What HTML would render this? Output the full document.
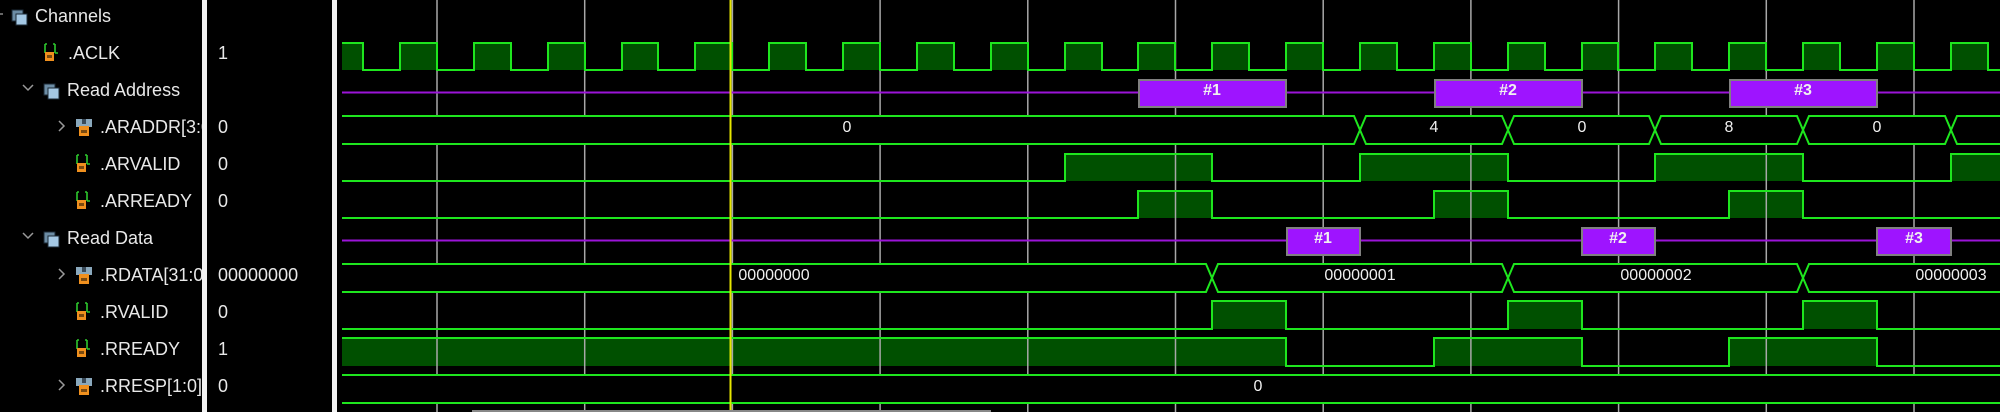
<!DOCTYPE html>
<html><head><meta charset="utf-8"><style>
html,body{margin:0;padding:0;background:#000;width:2000px;height:412px;overflow:hidden}
.t{position:absolute;font-family:"Liberation Sans",sans-serif;font-size:18px;color:#e8e8e8;white-space:nowrap;line-height:1}
#names{position:absolute;left:0;top:0;width:202px;height:412px;overflow:hidden}
</style></head><body>
<svg width="2000" height="412" style="position:absolute;left:0;top:0">
<defs>
<g id="sig"><path d="M1,1 V10 M1,1 H3 M11,1 V10 M11,10 H14 M9,1 H11" stroke="#2ec82e" stroke-width="1.6" fill="none"/><rect x="1" y="9" width="9" height="9" fill="#f0901e"/><rect x="3" y="12" width="5" height="3" fill="#7a4a10"/></g>
<g id="bus"><rect x="0" y="0" width="16" height="8" fill="#8aa8bc"/><rect x="6" y="0" width="4" height="5" fill="#3a4a58"/><rect x="3" y="7" width="10" height="10" fill="#f0901e"/><rect x="5" y="11" width="6" height="3" fill="#7a4a10"/></g>
<g id="grp"><rect x="0" y="0" width="11" height="11" fill="#6c8ca4" stroke="#1c2a36" stroke-width="1"/><rect x="4" y="4" width="11" height="11" fill="#a4c8e4" stroke="#1c2a36" stroke-width="1"/></g>
</defs>
<path d="M0,14 L3,14" stroke="#888" stroke-width="1.5"/>
<use href="#grp" x="12" y="10"/>
<use href="#sig" x="44" y="43"/>
<path d="M23,85 L28,90 L33,85" stroke="#999" stroke-width="1.5" fill="none"/>
<use href="#grp" x="44" y="84"/>
<path d="M59,121 L64,126 L59,131" stroke="#999" stroke-width="1.5" fill="none"/>
<use href="#bus" x="76" y="119"/>
<use href="#sig" x="76" y="154"/>
<use href="#sig" x="76" y="191"/>
<path d="M23,233 L28,238 L33,233" stroke="#999" stroke-width="1.5" fill="none"/>
<use href="#grp" x="44" y="232"/>
<path d="M59,269 L64,274 L59,279" stroke="#999" stroke-width="1.5" fill="none"/>
<use href="#bus" x="76" y="267"/>
<use href="#sig" x="76" y="302"/>
<use href="#sig" x="76" y="339"/>
<path d="M59,380 L64,385 L59,390" stroke="#999" stroke-width="1.5" fill="none"/>
<use href="#bus" x="76" y="378"/>
<g fill="#005000">
<polygon points="342,43 363,43 363,70 400,70 400,43 437,43 437,70 474,70 474,43 511,43 511,70 548,70 548,43 585,43 585,70 622,70 622,43 658,43 658,70 695,70 695,43 732,43 732,70 769,70 769,43 806,43 806,70 843,70 843,43 880,43 880,70 917,70 917,43 954,43 954,70 991,70 991,43 1028,43 1028,70 1065,70 1065,43 1102,43 1102,70 1138,70 1138,43 1175,43 1175,70 1212,70 1212,43 1249,43 1249,70 1286,70 1286,43 1323,43 1323,70 1360,70 1360,43 1397,43 1397,70 1434,70 1434,43 1471,43 1471,70 1508,70 1508,43 1545,43 1545,70 1582,70 1582,43 1618,43 1618,70 1655,70 1655,43 1692,43 1692,70 1729,70 1729,43 1766,43 1766,70 1803,70 1803,43 1840,43 1840,70 1877,70 1877,43 1914,43 1914,70 1951,70 1951,43 1988,43 1988,70 2000,70 342,70"/>
<rect x="1065" y="154" width="147" height="27"/><rect x="1360" y="154" width="148" height="27"/><rect x="1655" y="154" width="148" height="27"/><rect x="1951" y="154" width="49" height="27"/>
<rect x="1138" y="191" width="74" height="27"/><rect x="1434" y="191" width="74" height="27"/><rect x="1729" y="191" width="74" height="27"/>
<rect x="1212" y="301" width="74" height="28"/><rect x="1508" y="301" width="74" height="28"/><rect x="1803" y="301" width="74" height="28"/>
<rect x="342" y="338" width="944" height="28"/><rect x="1434" y="338" width="148" height="28"/><rect x="1729" y="338" width="148" height="28"/>
</g>
<g stroke="#a8a8a8" stroke-width="1.5">
<line x1="437" y1="0" x2="437" y2="412"/><line x1="584.7" y1="0" x2="584.7" y2="412"/><line x1="732.4" y1="0" x2="732.4" y2="412"/><line x1="880.1" y1="0" x2="880.1" y2="412"/><line x1="1027.8" y1="0" x2="1027.8" y2="412"/><line x1="1175.5" y1="0" x2="1175.5" y2="412"/><line x1="1323.2" y1="0" x2="1323.2" y2="412"/><line x1="1470.9" y1="0" x2="1470.9" y2="412"/><line x1="1618.6" y1="0" x2="1618.6" y2="412"/><line x1="1766.3" y1="0" x2="1766.3" y2="412"/><line x1="1914" y1="0" x2="1914" y2="412"/>
</g>
<g stroke="#1ee61e" stroke-width="2" fill="none">
<polyline points="342,43 363,43 363,70 400,70 400,43 437,43 437,70 474,70 474,43 511,43 511,70 548,70 548,43 585,43 585,70 622,70 622,43 658,43 658,70 695,70 695,43 732,43 732,70 769,70 769,43 806,43 806,70 843,70 843,43 880,43 880,70 917,70 917,43 954,43 954,70 991,70 991,43 1028,43 1028,70 1065,70 1065,43 1102,43 1102,70 1138,70 1138,43 1175,43 1175,70 1212,70 1212,43 1249,43 1249,70 1286,70 1286,43 1323,43 1323,70 1360,70 1360,43 1397,43 1397,70 1434,70 1434,43 1471,43 1471,70 1508,70 1508,43 1545,43 1545,70 1582,70 1582,43 1618,43 1618,70 1655,70 1655,43 1692,43 1692,70 1729,70 1729,43 1766,43 1766,70 1803,70 1803,43 1840,43 1840,70 1877,70 1877,43 1914,43 1914,70 1951,70 1951,43 1988,43 1988,70 2000,70"/>
<polyline points="342,181 1065,181 1065,154 1212,154 1212,181 1360,181 1360,154 1508,154 1508,181 1655,181 1655,154 1803,154 1803,181 1951,181 1951,154 2000,154"/>
<polyline points="342,218 1138,218 1138,191 1212,191 1212,218 1434,218 1434,191 1508,191 1508,218 1729,218 1729,191 1803,191 1803,218 2000,218"/>
<polyline points="342,329 1212,329 1212,301 1286,301 1286,329 1508,329 1508,301 1582,301 1582,329 1803,329 1803,301 1877,301 1877,329 2000,329"/>
<polyline points="342,338 1286,338 1286,366 1434,366 1434,338 1582,338 1582,366 1729,366 1729,338 1877,338 1877,366 2000,366"/>
</g>
<g stroke="#9b14d8" stroke-width="2"><line x1="342" y1="92.5" x2="2000" y2="92.5"/><line x1="342" y1="240.5" x2="2000" y2="240.5"/></g>
<g fill="#9e14ff" stroke="#808080" stroke-width="2">
<rect x="1139" y="80" width="147" height="27"/><rect x="1435" y="80" width="147" height="27"/><rect x="1730" y="80" width="147" height="27"/>
<rect x="1287" y="228" width="73" height="27"/><rect x="1582" y="228" width="73" height="27"/><rect x="1877" y="228" width="74" height="27"/>
</g>
<g fill="#000" stroke="#1ee61e" stroke-width="2">
<polygon points="320,116 1354,116 1360,130 1354,144 320,144"/>
<polygon points="1360,130 1366,116 1502,116 1508,130 1502,144 1366,144"/>
<polygon points="1508,130 1514,116 1649,116 1655,130 1649,144 1514,144"/>
<polygon points="1655,130 1661,116 1797,116 1803,130 1797,144 1661,144"/>
<polygon points="1803,130 1809,116 1945,116 1951,130 1945,144 1809,144"/>
<polygon points="1951,130 1957,116 2010,116 2010,144 1957,144"/>
<polygon points="320,264 1206,264 1212,278 1206,292 320,292"/>
<polygon points="1212,278 1218,264 1502,264 1508,278 1502,292 1218,292"/>
<polygon points="1508,278 1514,264 1797,264 1803,278 1797,292 1514,292"/>
<polygon points="1803,278 1809,264 2010,264 2010,292 1809,292"/>
<polygon points="320,375 2010,375 2010,403 320,403"/>
</g>
<rect x="207" y="0" width="135" height="412" fill="#000"/>
<rect x="202" y="0" width="5" height="412" fill="#f2f2f2"/>
<rect x="332" y="0" width="5" height="412" fill="#f2f2f2"/>
<g font-family="Liberation Sans, sans-serif" font-size="16" fill="#f0f0f0" text-anchor="middle">
<text x="847" y="132">0</text><text x="1434" y="132">4</text><text x="1582" y="132">0</text><text x="1729" y="132">8</text><text x="1877" y="132">0</text>
<text x="774" y="280">00000000</text><text x="1360" y="280">00000001</text><text x="1656" y="280">00000002</text><text x="1951" y="280">00000003</text>
<text x="1258" y="391">0</text>
<g font-weight="bold"><text x="1212" y="95">#1</text><text x="1508" y="95">#2</text><text x="1803" y="95">#3</text>
<text x="1323" y="243">#1</text><text x="1618" y="243">#2</text><text x="1914" y="243">#3</text></g>
</g>
<line x1="730.5" y1="0" x2="730.5" y2="412" stroke="#e6e600" stroke-width="2"/>
<line x1="472" y1="411" x2="991" y2="411" stroke="#888" stroke-width="2"/>
</svg>
<div id="names">
<div class="t" style="left:35px;top:7px">Channels</div>
<div class="t" style="left:68px;top:44px">.ACLK</div>
<div class="t" style="left:67px;top:81px">Read Address</div>
<div class="t" style="left:100px;top:118px">.ARADDR[3:0]</div>
<div class="t" style="left:100px;top:155px">.ARVALID</div>
<div class="t" style="left:100px;top:192px">.ARREADY</div>
<div class="t" style="left:67px;top:229px">Read Data</div>
<div class="t" style="left:100px;top:266px">.RDATA[31:0]</div>
<div class="t" style="left:100px;top:303px">.RVALID</div>
<div class="t" style="left:100px;top:340px">.RREADY</div>
<div class="t" style="left:100px;top:377px">.RRESP[1:0]</div>
</div>
<div class="t" style="left:218px;top:44px">1</div>
<div class="t" style="left:218px;top:118px">0</div>
<div class="t" style="left:218px;top:155px">0</div>
<div class="t" style="left:218px;top:192px">0</div>
<div class="t" style="left:218px;top:266px">00000000</div>
<div class="t" style="left:218px;top:303px">0</div>
<div class="t" style="left:218px;top:340px">1</div>
<div class="t" style="left:218px;top:377px">0</div>
</body></html>
